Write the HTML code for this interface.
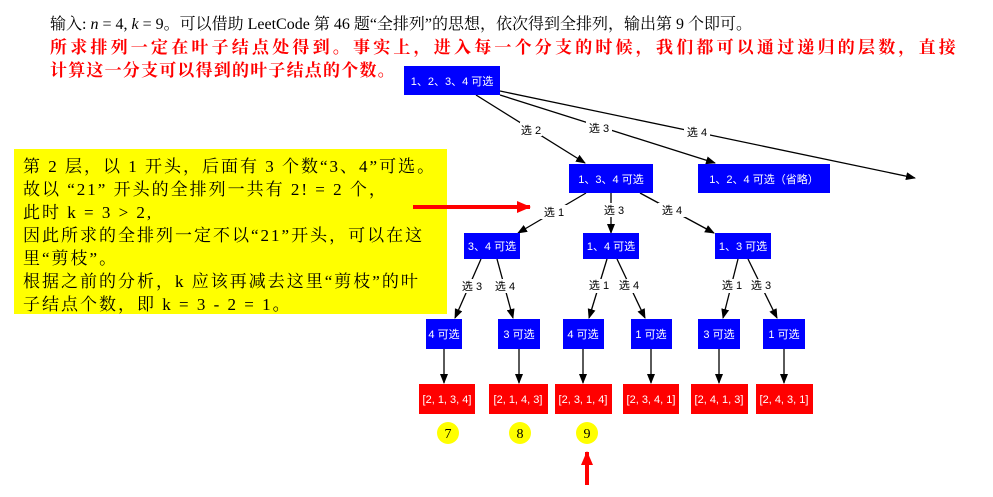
<!DOCTYPE html>
<html><head><meta charset="utf-8"><style>
body{margin:0;background:#fff;width:993px;height:497px;overflow:hidden;position:relative;font-family:"Liberation Serif","Noto Serif CJK SC",serif}
.t{position:absolute;left:50px;font-size:16px;white-space:nowrap;line-height:23px}
.r{color:#f00;font-weight:bold;font-size:17px}
.y{position:absolute;left:14px;top:149px;width:433px;height:165px;background:#ff0;}
.y div{position:absolute;left:9px;font-size:17px;white-space:nowrap;letter-spacing:2px}
svg{position:absolute;left:0;top:0}
svg text{font-family:"Liberation Sans","Noto Sans CJK SC",sans-serif;font-size:11px}
</style></head><body>
<div class="t" style="top:13px">输入: <i>n</i> = 4, <i>k</i> = 9。可以借助 LeetCode 第 46 题“全排列”的思想，依次得到全排列，输出第 9 个即可。</div>
<div class="t r" style="top:36px;letter-spacing:3.2px">所求排列一定在叶子结点处得到。事实上，进入每一个分支的时候，我们都可以通过递归的层数，直接</div>
<div class="t r" style="top:59px;letter-spacing:1.2px">计算这一分支可以得到的叶子结点的个数。</div>
<div class="y">
<div style="top:3px">第 2 层，以 1 开头，后面有 3 个数“3、4”可选。</div>
<div style="top:26px">故以 “21” 开头的全排列一共有 2! = 2 个，</div>
<div style="top:49px">此时 k = 3 &gt; 2,</div>
<div style="top:72px">因此所求的全排列一定不以“21”开头，可以在这</div>
<div style="top:95px">里“剪枝”。</div>
<div style="top:118px">根据之前的分析，k 应该再减去这里“剪枝”的叶</div>
<div style="top:141px">子结点个数，即 k = 3 - 2 = 1。</div>
</div>
<svg width="993" height="497">
<defs><marker id="a" markerWidth="10" markerHeight="8" refX="9" refY="4" orient="auto" markerUnits="userSpaceOnUse"><path d="M0,0L10,4L0,8z" fill="#000"/></marker>
<marker id="b" markerWidth="14" markerHeight="12" refX="13" refY="6" orient="auto" markerUnits="userSpaceOnUse"><path d="M0,0L14,6L0,12z" fill="#f00"/></marker></defs>
<g stroke="#000" stroke-width="1.3" fill="none" marker-end="url(#a)">
<line x1="476" y1="95" x2="585" y2="163"/>
<line x1="500" y1="95" x2="715" y2="163"/>
<line x1="500" y1="91" x2="915" y2="178"/>
<line x1="586" y1="193" x2="518" y2="233"/>
<line x1="611" y1="193" x2="611" y2="233"/>
<line x1="640" y1="193" x2="714" y2="233"/>
<line x1="481" y1="259" x2="455" y2="318"/>
<line x1="497" y1="259" x2="513" y2="318"/>
<line x1="607" y1="259" x2="589" y2="318"/>
<line x1="617" y1="259" x2="645" y2="318"/>
<line x1="738" y1="259" x2="723" y2="318"/>
<line x1="748" y1="259" x2="777" y2="318"/>
<line x1="444" y1="349" x2="444" y2="383"/>
<line x1="519" y1="349" x2="519" y2="383"/>
<line x1="583" y1="349" x2="583" y2="383"/>
<line x1="651" y1="349" x2="651" y2="383"/>
<line x1="719" y1="349" x2="719" y2="383"/>
<line x1="784" y1="349" x2="784" y2="383"/>
</g>
<g fill="#fff" text-anchor="middle">
<rect x="520" y="122" width="22" height="14"/><rect x="586" y="120" width="26" height="14"/><rect x="684" y="124" width="26" height="14"/>
<rect x="540" y="205" width="28" height="14"/><rect x="600" y="203" width="28" height="14"/><rect x="658" y="203" width="28" height="14"/>
<rect x="458" y="279" width="66" height="14"/><rect x="586" y="279" width="56" height="14"/><rect x="720" y="279" width="56" height="14"/>
</g>
<g fill="#000" text-anchor="middle">
<text x="531" y="134">选 2</text><text x="599" y="132">选 3</text><text x="697" y="136">选 4</text>
<text x="554" y="216">选 1</text><text x="614" y="214">选 3</text><text x="672" y="214">选 4</text>
<text x="472" y="290">选 3</text><text x="505" y="290">选 4</text><text x="599" y="289">选 1</text><text x="629" y="289">选 4</text><text x="732" y="289">选 1</text><text x="761" y="289">选 3</text>
</g>
<g fill="#0000ff">
<rect x="404" y="66" width="96" height="29"/>
<rect x="569" y="164" width="84" height="29"/><rect x="698" y="164" width="132" height="29"/>
<rect x="464" y="233" width="56" height="26"/><rect x="583" y="233" width="56" height="26"/><rect x="715" y="233" width="56" height="26"/>
<rect x="426" y="319" width="36" height="30"/><rect x="498" y="319" width="42" height="30"/><rect x="563" y="319" width="41" height="30"/><rect x="631" y="319" width="41" height="30"/><rect x="698" y="319" width="42" height="30"/><rect x="763" y="319" width="42" height="30"/>
</g>
<g fill="#f00">
<rect x="419" y="384" width="56" height="30"/><rect x="489" y="384" width="59" height="30"/><rect x="555" y="384" width="57" height="30"/><rect x="623" y="384" width="56" height="30"/><rect x="691" y="384" width="57" height="30"/><rect x="756" y="384" width="57" height="30"/>
</g>
<g fill="#fff" text-anchor="middle">
<text x="452" y="85">1、2、3、4 可选</text>
<text x="611" y="183">1、3、4 可选</text><text x="764" y="183">1、2、4 可选（省略）</text>
<text x="492" y="250">3、4 可选</text><text x="611" y="250">1、4 可选</text><text x="743" y="250">1、3 可选</text>
<text x="444" y="338">4 可选</text><text x="519" y="338">3 可选</text><text x="583" y="338">4 可选</text><text x="651" y="338">1 可选</text><text x="719" y="338">3 可选</text><text x="784" y="338">1 可选</text>
<text x="447" y="403">[2, 1, 3, 4]</text><text x="518" y="403">[2, 1, 4, 3]</text><text x="583" y="403">[2, 3, 1, 4]</text><text x="651" y="403">[2, 3, 4, 1]</text><text x="719" y="403">[2, 4, 1, 3]</text><text x="784" y="403">[2, 4, 3, 1]</text>
</g>
<g fill="#ff0"><circle cx="448" cy="433" r="11"/><circle cx="520" cy="433" r="11"/><circle cx="587" cy="433" r="11"/></g>
<g fill="#000" text-anchor="middle"><text x="448" y="438" style="font-family:'Liberation Serif',serif;font-size:14px">7</text><text x="520" y="438" style="font-family:'Liberation Serif',serif;font-size:14px">8</text><text x="587" y="438" style="font-family:'Liberation Serif',serif;font-size:14px">9</text></g>
<g stroke="#f00" stroke-width="4" marker-end="url(#b)">
<line x1="413" y1="207" x2="530" y2="207"/>
<line x1="587" y1="485" x2="587" y2="452"/>
</g>
</svg>
</body></html>
